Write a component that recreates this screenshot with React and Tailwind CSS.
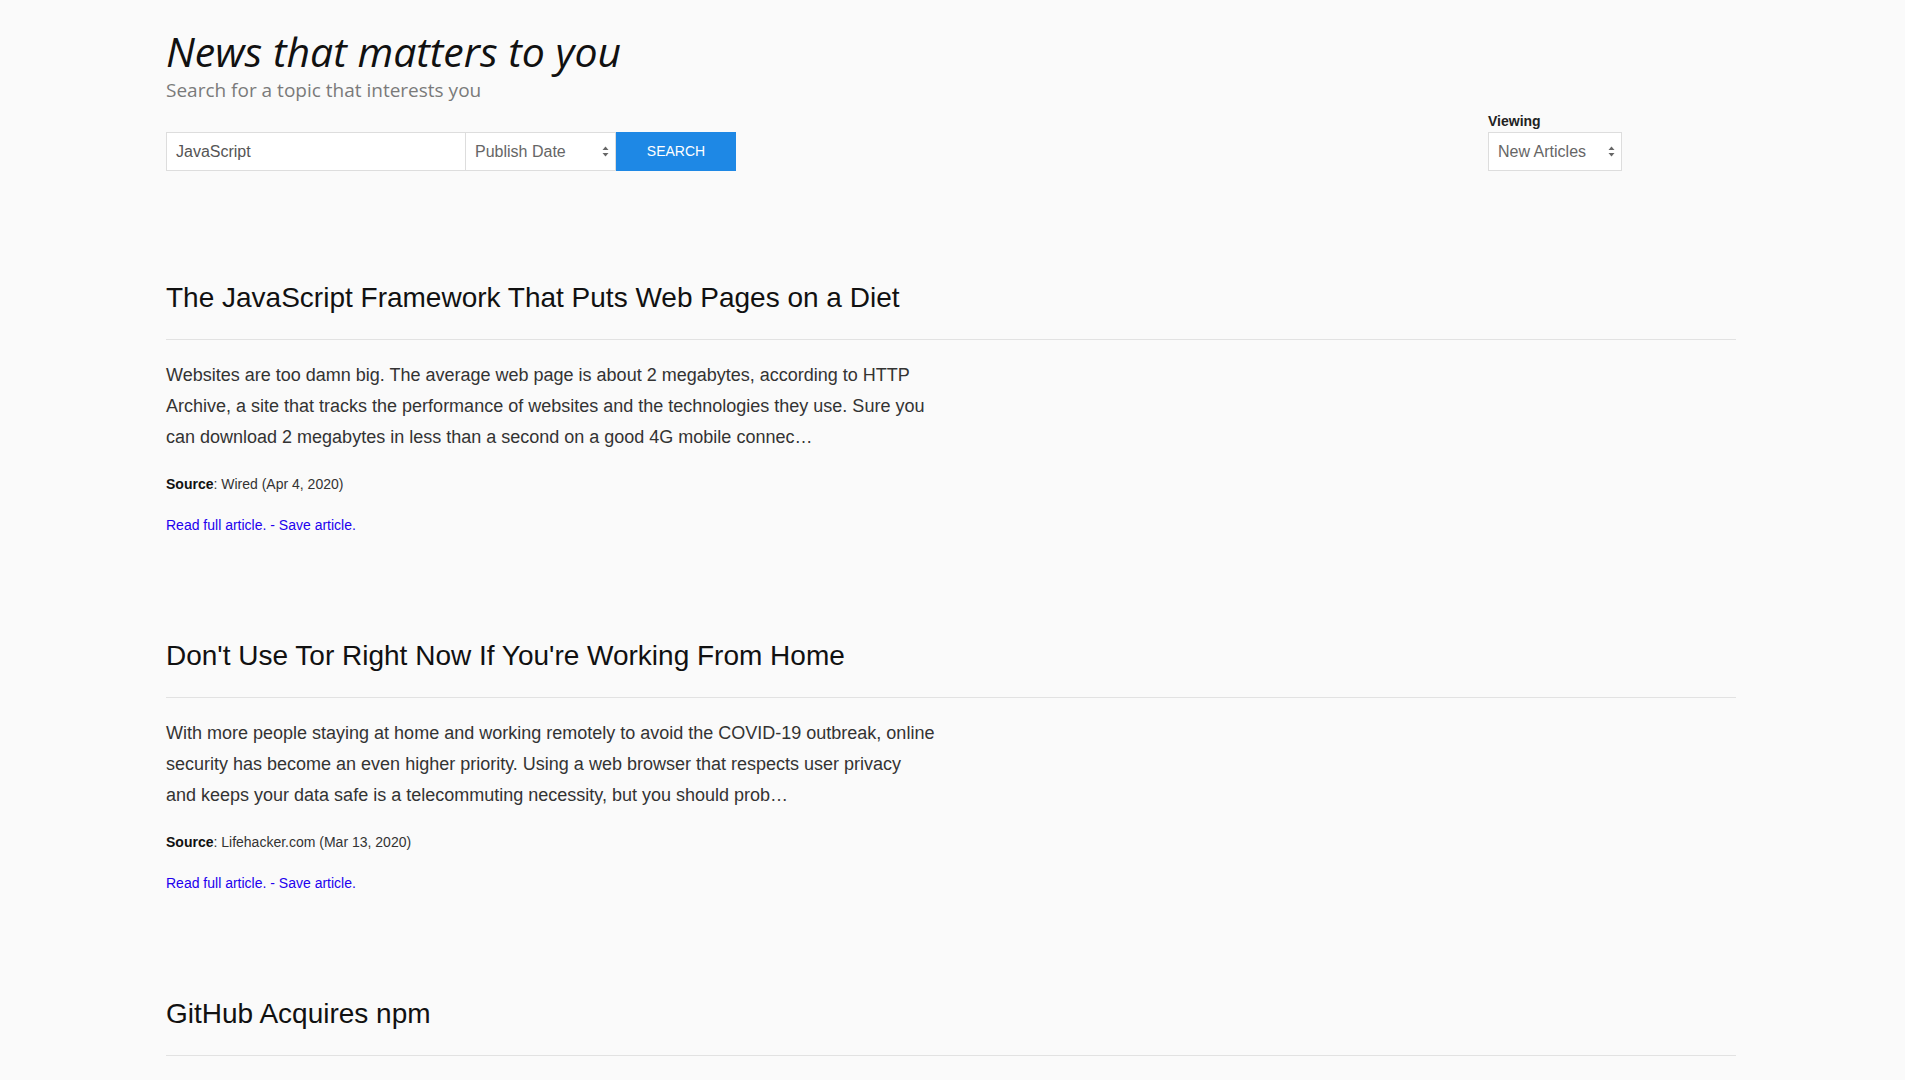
import React from "react";

// Articles shown in the feed
const articles = [
  {
    title: "The JavaScript Framework That Puts Web Pages on a Diet",
    body: "Websites are too damn big. The average web page is about 2 megabytes, according to HTTP Archive, a site that tracks the performance of websites and the technologies they use. Sure you can download 2 megabytes in less than a second on a good 4G mobile connec…",
    source: "Wired (Apr 4, 2020)",
  },
  {
    title: "Don't Use Tor Right Now If You're Working From Home",
    body: "With more people staying at home and working remotely to avoid the COVID-19 outbreak, online security has become an even higher priority. Using a web browser that respects user privacy and keeps your data safe is a telecommuting necessity, but you should prob…",
    source: "Lifehacker.com (Mar 13, 2020)",
  },
  {
    title: "GitHub Acquires npm",
    body: "We're excited to announce that GitHub has signed an agreement to acquire npm. npm is a critical part of the JavaScript world. The work of the npm team over the last 10 years, and the contributions of hundreds of thousands of open source developers and…",
    source: "GitHub Blog (Mar 16, 2020)",
  },
];

const Arrows = () => (
  <svg width="7" height="11" viewBox="0 0 7 11" className="shrink-0">
    <path d="M3.5 0.5 L6.5 4 L0.5 4 Z" fill="#666" />
    <path d="M3.5 10.5 L6.5 7 L0.5 7 Z" fill="#666" />
  </svg>
);

const Select = ({ label, className = "" }) => (
  <div
    className={`flex items-center justify-between h-[39px] bg-white border border-[#dddddd] pl-[9px] pr-[6px] text-[16px] text-[#666] ${className}`}
  >
    <span>{label}</span>
    <Arrows />
  </div>
);

const Article = ({ item, first }) => (
  <div className={first ? "" : "mt-[107px]"}>
    <h2 className="text-[28px] leading-[30px] text-[#111]">{item.title}</h2>
    <div className="mt-[26px] h-[1px] bg-[#e2e2e2]" />
    <p className="mt-[20px] w-[769px] text-[18px] leading-[31px] text-[#333]">
      {item.body}
    </p>
    <div className="mt-[22px] text-[14px] leading-[18px] text-[#333]">
      <span className="font-bold text-[#111]">Source</span>: {item.source}
    </div>
    <div className="mt-[23px] text-[14px] leading-[18px] text-[#2200ee]">
      <a href="#">Read full article.</a> - <a href="#">Save article.</a>
    </div>
  </div>
);

export default function App() {
  return (
    <div
      className="min-h-screen bg-[#fafafa] overflow-hidden"
      style={{ fontFamily: "'Liberation Sans', Arial, sans-serif" }}
    >
      <div className="ml-[166px] w-[1570px] pt-[27px]">
        {/* header */}
        <h1
          className="text-[41px] leading-[48px] italic font-normal text-[#111]"
          style={{ fontFamily: "'Open Sans', sans-serif" }}
        >
          News that matters to you
        </h1>
        <div
          className="mt-[3px] text-[19px] leading-[24px] text-[#7a7a7a]"
          style={{ fontFamily: "'Open Sans', sans-serif" }}
        >
          Search for a topic that interests you
        </div>

        {/* search row */}
        <div className="mt-[11px] flex items-end">
          <div className="flex">
            <div className="w-[300px] h-[39px] bg-white border border-[#dddddd] px-[9px] flex items-center text-[16px] text-[#555]">
              JavaScript
            </div>
            <Select label="Publish Date" className="w-[150px] border-l-0" />
            <button className="w-[120px] h-[39px] bg-[#1e88e5] text-white text-[14px]">
              SEARCH
            </button>
          </div>
          <div className="ml-auto mr-[114px]">
            <div className="text-[14px] leading-[16px] font-bold text-[#222] mb-[3px]">
              Viewing
            </div>
            <Select label="New Articles" className="w-[134px]" />
          </div>
        </div>

        {/* articles */}
        <div className="mt-[112px] pb-[60px]">
          {articles.map((a, i) => (
            <Article key={i} item={a} first={i === 0} />
          ))}
        </div>
      </div>
    </div>
  );
}
